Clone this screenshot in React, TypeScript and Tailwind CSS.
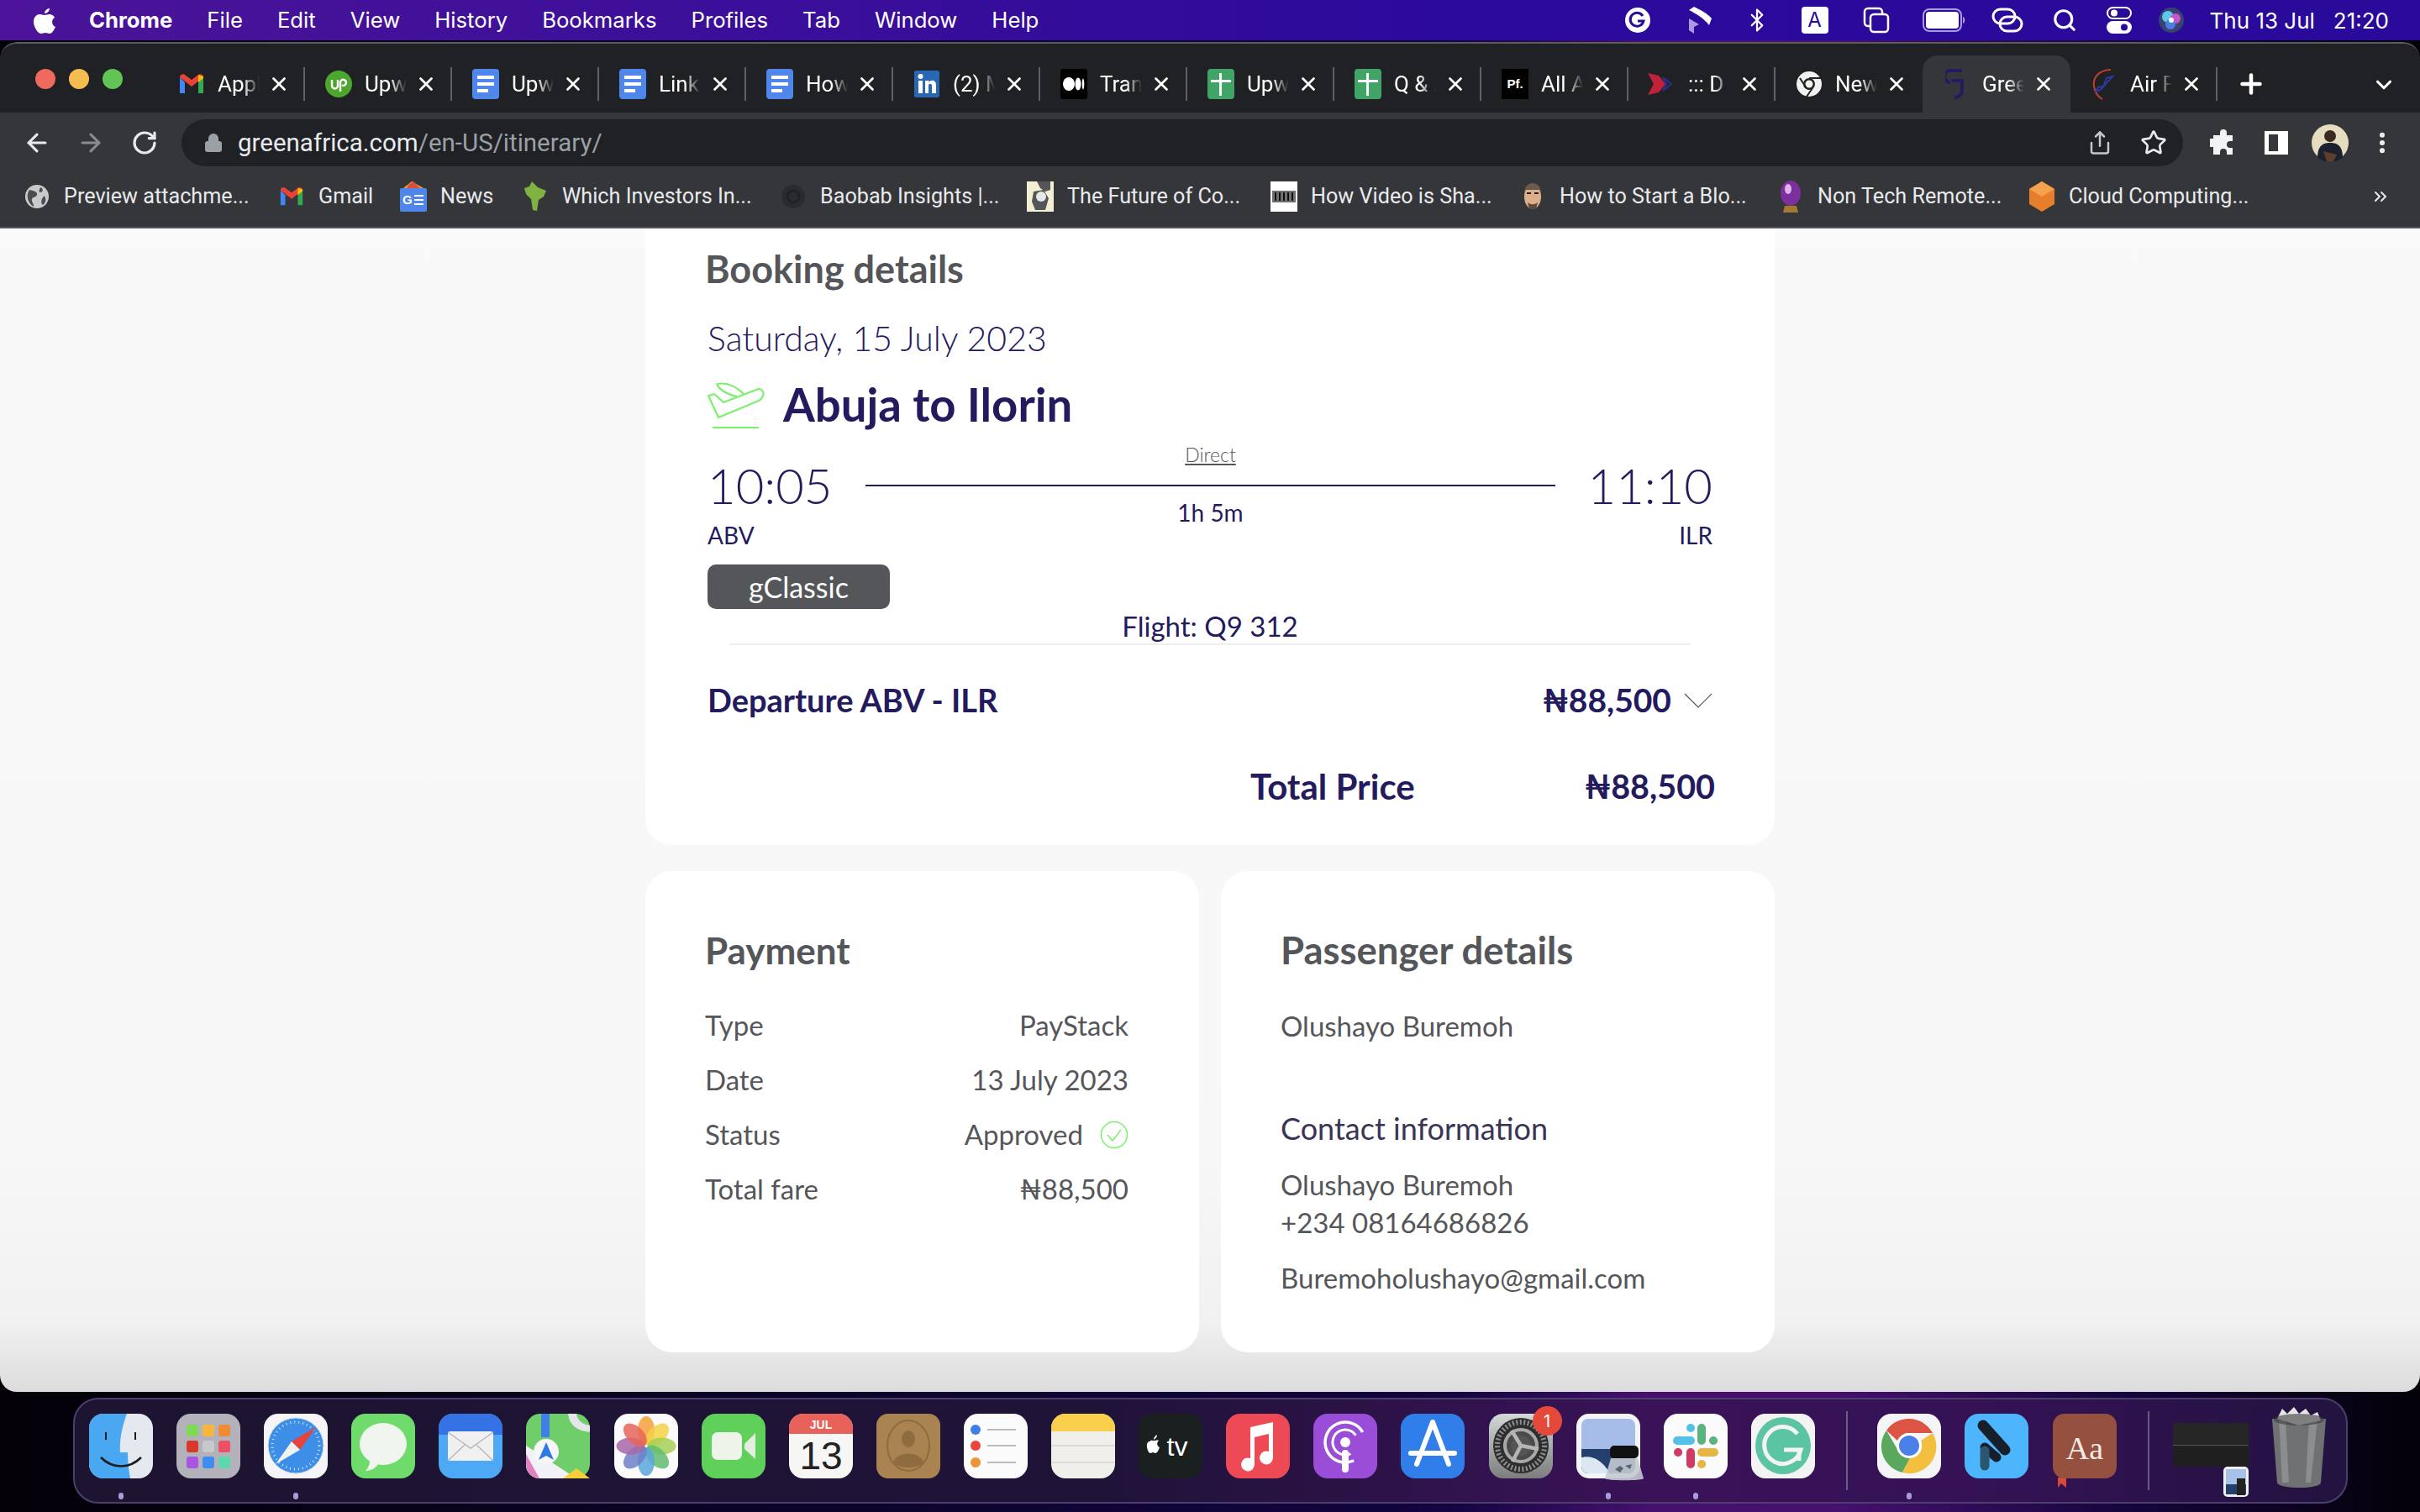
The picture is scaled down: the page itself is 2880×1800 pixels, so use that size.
import type { ReactNode } from "react";
import {
  ArrowLeft,
  ArrowRight,
  Bluetooth,
  ChevronDown,
  ChevronsRight,
  Lock,
  MoreVertical,
  Plus,
  RotateCw,
  Search,
  Share,
  Star,
  X,
} from "lucide-react";

const GmailIcon = ({ size = 32 }: { size?: number }) => (
  <svg width={size} height={size} viewBox="0 0 32 32" className="shrink-0">
    <path d="M2 8v19h6V14z" fill="#4285f4" />
    <path d="M30 8v19h-6V14z" fill="#34a853" />
    <path d="M2 8l14 11L30 8v-1a4 4 0 0 0-6-2L16 11 8 5a4 4 0 0 0-6 2z" fill="#ea4335" />
    <path d="M24 5l6 2v2l-6 5z" fill="#fbbc04" />
  </svg>
);

const DocsIcon = () => (
  <svg width={32} height={36} viewBox="0 0 32 36" className="shrink-0">
    <rect width="32" height="36" rx="4" fill="#4f86ec" />
    <rect x="6" y="8" width="20" height="4" fill="#fff" />
    <rect x="6" y="16" width="20" height="4" fill="#fff" />
    <rect x="6" y="24" width="13" height="4" fill="#fff" />
  </svg>
);

const SheetsIcon = () => (
  <svg width={32} height={36} viewBox="0 0 32 36" className="shrink-0">
    <rect width="32" height="36" rx="4" fill="#3fa465" />
    <rect x="4" y="13" width="24" height="3" fill="#fff" />
    <rect x="14" y="5" width="3" height="27" fill="#fff" />
  </svg>
);

const tabs: { icon: ReactNode; title: string; active?: boolean }[] = [
  { icon: <GmailIcon />, title: "Appl" },
  {
    icon: (
      <svg width={32} height={32} viewBox="0 0 32 32" className="shrink-0">
        <circle cx="16" cy="16" r="16" fill="#4da72e" />
        <path d="M8 11v7a3.500 3.500 0 0 0 7 0v-7M18 25V14a3.500 3.500 0 1 1 2 3.500" fill="none" stroke="#fff" strokeWidth="2.400" />
      </svg>
    ),
    title: "Upw",
  },
  { icon: <DocsIcon />, title: "Upw" },
  { icon: <DocsIcon />, title: "Link" },
  { icon: <DocsIcon />, title: "How" },
  {
    icon: (
      <svg width={30} height={32} viewBox="0 0 30 32" className="shrink-0">
        <rect width="30" height="32" rx="2" fill="#2867b2" />
        <rect x="5" y="12" width="5" height="15" fill="#fff" />
        <circle cx="7.500" cy="7" r="3" fill="#fff" />
        <path d="M13 12h4.500v2c2-3.500 8.500-3 8.500 3v10h-5v-9c0-3-4-3-4 0v9h-4z" fill="#fff" />
      </svg>
    ),
    title: "(2) M",
  },
  {
    icon: (
      <svg width={32} height={36} viewBox="0 0 32 36" className="shrink-0">
        <rect width="32" height="36" rx="3" fill="#000" />
        <ellipse cx="10" cy="18" rx="7" ry="8" fill="#fff" />
        <ellipse cx="21" cy="18" rx="3.500" ry="7.500" fill="#fff" />
        <ellipse cx="27" cy="18" rx="1.300" ry="6.500" fill="#fff" />
      </svg>
    ),
    title: "Tran",
  },
  { icon: <SheetsIcon />, title: "Upw" },
  { icon: <SheetsIcon />, title: "Q & A" },
  {
    icon: (
      <div className="w-[32px] h-[36px] bg-black flex items-center justify-center text-white text-[15px] font-bold shrink-0 [font-family:'Liberation_Sans',sans-serif]">
        Pf.
      </div>
    ),
    title: "All A",
  },
  {
    icon: (
      <svg width={34} height={32} viewBox="0 0 34 32" className="shrink-0">
        <path d="M0 3l13 3 8 10-8 10-13 3 7-13z" fill="#c0223b" />
        <path d="M18 8l10 8-10 8 4-8z" fill="none" stroke="#2b2f8f" strokeWidth="2" />
      </svg>
    ),
    title: "::: D",
  },
  {
    icon: (
      <svg width={32} height={32} viewBox="0 0 32 32" className="shrink-0">
        <circle cx="16" cy="16" r="15" fill="#f1f1f1" />
        <circle cx="16" cy="16" r="7" fill="#202124" />
        <circle cx="16" cy="16" r="4.500" fill="#f1f1f1" />
        <path d="M5 9l8 12M16 9h14M13 31l7-10" stroke="#202124" strokeWidth="2" />
      </svg>
    ),
    title: "New",
  },
  {
    icon: (
      <svg width={26} height={36} viewBox="0 0 26 36" className="shrink-0">
        <path d="M6 16a7 7 0 0 1 0-14h14M8 14h12v12c0 5-5 8-9 8" fill="none" stroke="#241a63" strokeWidth="4" />
      </svg>
    ),
    title: "Gree",
    active: true,
  },
  {
    icon: (
      <svg width={32} height={38} viewBox="0 0 32 38" className="shrink-0">
        <path d="M24 2C10 2 2 12 4 22s8 14 10 15" fill="none" stroke="#c0402a" strokeWidth="2" />
        <path d="M26 10L12 26l-6 2 3-5 6-1 4-10z" fill="none" stroke="#2b3a9f" strokeWidth="2" />
      </svg>
    ),
    title: "Air F",
  },
];

const bookmarks: { icon: ReactNode; title: string; width: string }[] = [
  {
    icon: (
      <svg width={30} height={30} viewBox="0 0 30 30" className="shrink-0">
        <circle cx="15" cy="15" r="14" fill="#c9cacc" />
        <path d="M6 7c6 1 10 3 9 6s-5 2-6 5 3 6 2 9C5 24 1 14 6 7zM20 4c3 3 2 6-2 6-1-2 0-5 2-6zM24 14c2 4 2 8-2 11-3-2-2-8 2-11z" fill="#4a4c50" />
      </svg>
    ),
    title: "Preview attachme...",
    width: "w-[303px]",
  },
  { icon: <GmailIcon size={30} />, title: "Gmail", width: "w-[145px]" },
  {
    icon: (
      <svg width={32} height={36} viewBox="0 0 32 36" className="shrink-0">
        <path d="M4 8l10-8 14 8z" fill="#f0a830" />
        <path d="M10 4l6-4 8 8H8z" fill="#d9503f" />
        <rect y="8" width="32" height="28" rx="2" fill="#4f86ec" />
        <text x="3" y="27" fontSize="15" fontWeight="700" fill="#fff" fontFamily="Liberation Sans">G</text>
        <path d="M17 17h11M17 22h11M17 27h11" stroke="#fff" strokeWidth="2" />
      </svg>
    ),
    title: "News",
    width: "w-[145px]",
  },
  {
    icon: (
      <svg width={30} height={36} viewBox="0 0 30 36" className="shrink-0">
        <path d="M2 8l6-2 3-6 7 7 10 4-3 7-6 4-2 13-5-1-2-13-6-6z" fill="#7fb241" />
      </svg>
    ),
    title: "Which Investors In...",
    width: "w-[307px]",
  },
  {
    icon: (
      <svg width={30} height={30} viewBox="0 0 30 30" className="shrink-0">
        <circle cx="15" cy="15" r="14" fill="#2a2b2e" />
        <circle cx="15" cy="15" r="7" fill="none" stroke="#202124" strokeWidth="3" />
      </svg>
    ),
    title: "Baobab Insights |...",
    width: "w-[294px]",
  },
  {
    icon: (
      <svg width={32} height={36} viewBox="0 0 32 36" className="shrink-0">
        <rect width="32" height="36" fill="#f4efd4" />
        <path d="M12 0h16v10l-6 2-6-4zM8 12l12-2 6 10-4 14H10l-4-10z" fill="#55565a" />
        <circle cx="17" cy="18" r="6" fill="#e8e8e8" />
      </svg>
    ),
    title: "The Future of Co...",
    width: "w-[290px]",
  },
  {
    icon: (
      <svg width={32} height={36} viewBox="0 0 32 36" className="shrink-0">
        <rect width="32" height="36" fill="#fff" />
        <rect x="2" y="11" width="28" height="14" fill="#6f6f6f" />
        <path d="M6 13v10M11 13v10M16 13v10M21 13v10M26 13v10" stroke="#111" strokeWidth="2" />
      </svg>
    ),
    title: "How Video is Sha...",
    width: "w-[296px]",
  },
  {
    icon: (
      <svg width={26} height={36} viewBox="0 0 26 36" className="shrink-0">
        <ellipse cx="13" cy="18" rx="10" ry="15" fill="#dcae8c" />
        <path d="M3 14c0-16 20-16 20 0l-2-4H5z" fill="#6c5a4c" />
        <path d="M6 14h5M15 14h5" stroke="#222" strokeWidth="2" />
        <path d="M7 25c4 3 8 3 12 0l-2 8H9z" fill="#5c4a3e" />
      </svg>
    ),
    title: "How to Start a Blo...",
    width: "w-[307px]",
  },
  {
    icon: (
      <svg width={28} height={38} viewBox="0 0 28 38" className="shrink-0">
        <ellipse cx="14" cy="15" rx="12" ry="15" fill="#7e2f9e" />
        <ellipse cx="11" cy="10" rx="4" ry="6" fill="#dcb6ea" />
        <path d="M7 30h14l2 8H5z" fill="#a17b2f" />
      </svg>
    ),
    title: "Non Tech Remote...",
    width: "w-[299px]",
  },
  {
    icon: (
      <svg width={32} height={36} viewBox="0 0 32 36" className="shrink-0">
        <path d="M16 0l15 9v18l-15 9-15-9V9z" fill="#e67e2b" />
        <path d="M16 0l15 9-15 9-15-9z" fill="#f4a24d" />
      </svg>
    ),
    title: "Cloud Computing...",
    width: "w-[373px]",
  },
];

const MenuBar = () => (
  <div className="h-[48px] shrink-0 flex items-center justify-between pl-[40px] pr-[37px] text-[25.700px] text-white bg-[linear-gradient(90deg,#4b1498,#2c0a9c_60%,#2a0a9a)] [font-family:Inter,sans-serif]">
    <div className="flex items-center gap-[41px]">
      <svg width={26} height={32} viewBox="0 0 26 32" fill="#fff" className="mr-[0px]">
        <path d="M19 2c0 3-3 6-6 6 0-3 3-6 6-6zM13 10c2 0 3-1 6-1 2 0 5 1 6 4-4 2-4 9 1 11-2 4-4 8-7 8-2 0-3-1-5-1s-3 1-5 1c-4 0-9-8-9-14 0-6 4-9 7-9 3 0 4 1 6 1z" />
      </svg>
      <span className="font-bold -ml-[1px]">Chrome</span>
      <span>File</span>
      <span>Edit</span>
      <span>View</span>
      <span>History</span>
      <span>Bookmarks</span>
      <span>Profiles</span>
      <span>Tab</span>
      <span>Window</span>
      <span>Help</span>
    </div>
    <div className="flex items-center">
      <svg width={32} height={32} viewBox="0 0 32 32" className="mr-[43px]">
        <circle cx="16" cy="16" r="15" fill="#fff" />
        <path d="M22 11a8 8 0 1 0 1 6h-7" fill="none" stroke="#2c0a9c" strokeWidth="3" />
      </svg>
      <svg width={30} height={32} viewBox="0 0 30 32" className="mr-[45px]">
        <path d="M2 4l6-4c8 4 16 8 21 14l-3 8C20 14 10 8 2 4z" fill="#fff" />
        <path d="M2 14l12 7-6 3v8l-6-4z" fill="#a99adf" />
      </svg>
      <Bluetooth size={30} color="#fff" strokeWidth={1.800} className="mr-[38px] -ml-[7px]" />
      <div className="w-[32px] h-[32px] bg-white rounded-[4px] flex items-center justify-center text-[#2c0a9c] text-[24px] mr-[41px]">
        A
      </div>
      <svg width={32} height={32} viewBox="0 0 32 32" fill="none" stroke="#fff" strokeWidth="2.500" className="mr-[39px]">
        <rect x="2" y="2" width="21" height="21" rx="4" />
        <rect x="9" y="9" width="21" height="21" rx="4" fill="#2c0a9c" />
      </svg>
      <svg width={52} height={28} viewBox="0 0 52 28" className="mr-[30px]">
        <rect x="1" y="1" width="45" height="26" rx="7" fill="none" stroke="#a99adf" strokeWidth="2" />
        <rect x="4" y="4" width="39" height="20" rx="4" fill="#fff" />
        <path d="M48 10c3 1 3 7 0 8z" fill="#a99adf" />
      </svg>
      <svg width={38} height={32} viewBox="0 0 38 32" fill="none" stroke="#fff" strokeWidth="3" className="mr-[34px]">
        <rect x="2" y="3" width="26" height="17" rx="8.500" />
        <rect x="10" y="12" width="26" height="17" rx="8.500" />
      </svg>
      <Search size={30} color="#fff" strokeWidth={2.500} className="mr-[35px]" />
      <svg width={30} height={32} viewBox="0 0 30 32" className="mr-[32px]">
        <rect x="1" y="1" width="28" height="13" rx="6.500" fill="none" stroke="#fff" strokeWidth="2" />
        <circle cx="9" cy="7.500" r="4" fill="#fff" />
        <rect y="17" width="30" height="15" rx="7.500" fill="#fff" />
        <circle cx="21" cy="24.500" r="4" fill="#2c0a9c" />
      </svg>
      <svg width={30} height={30} viewBox="0 0 30 30" className="mr-[31px]">
        <circle cx="15" cy="15" r="15" fill="#3a4270" />
        <circle cx="11" cy="11" r="7" fill="#5ac8e8" />
        <circle cx="20" cy="13" r="6" fill="#c755c9" />
        <circle cx="14" cy="20" r="6" fill="#4a7fe0" />
        <circle cx="15" cy="15" r="3" fill="#fff" />
      </svg>
      <span className="whitespace-pre text-[26px]">Thu 13 Jul   21:20</span>
    </div>
  </div>
);

const Tabs = () => (
  <div className="h-[84px] shrink-0 flex items-end bg-[#202124] pl-[188px] rounded-t-[20px] border-t-2 border-[#5b5c60] relative text-[26px] [font-family:Roboto,sans-serif]">
    <div className="absolute left-[42px] top-[30px] flex gap-[16px]">
      <div className="w-[24px] h-[24px] rounded-full bg-[#ee6a5f]" />
      <div className="w-[24px] h-[24px] rounded-full bg-[#f5bd4f]" />
      <div className="w-[24px] h-[24px] rounded-full bg-[#61c454]" />
    </div>
    {tabs.map((tab, i) => (
      <div
        key={i}
        className={
          tab.active
            ? "w-[176px] h-[68px] shrink-0 flex items-center pl-[23px] text-white bg-[#35363a] rounded-t-[18px]"
            : "w-[175px] h-[68px] shrink-0 flex items-center pl-[23px] text-white relative"
        }
      >
        <div className="w-[34px] flex justify-center shrink-0">{tab.icon}</div>
        <div className="w-[50px] ml-[14px] overflow-hidden whitespace-nowrap [mask-image:linear-gradient(90deg,#000_60%,transparent)]">
          {tab.title}
        </div>
        <X size={26} color="#fff" strokeWidth={2.500} className="ml-[10px] shrink-0" />
        {!tab.active && i !== 11 && <div className="absolute right-0 top-[14px] w-[2px] h-[40px] bg-[#5f6063]" />}
      </div>
    ))}
    <Plus size={36} color="#fff" strokeWidth={3} className="ml-[22px] mb-[16px] shrink-0" />
    <ChevronDown size={30} color="#fff" strokeWidth={2.500} className="ml-[125px] mb-[18px] shrink-0" />
  </div>
);

const Toolbar = () => (
  <div className="h-[72px] shrink-0 flex items-center bg-[#35363a] pl-[27px]">
    <ArrowLeft size={34} color="#e8eaed" strokeWidth={2.200} />
    <ArrowRight size={34} color="#8a8b8e" strokeWidth={2.200} className="ml-[30px]" />
    <RotateCw size={32} color="#e8eaed" strokeWidth={2.400} className="ml-[31px] mr-[28px]" />
    <div className="w-[2382px] h-[56px] rounded-full bg-[#202124] flex items-center pl-[26px] pr-[19px] text-[29.500px] [font-family:Roboto,sans-serif]">
      <Lock size={24} color="#9aa0a6" fill="#9aa0a6" />
      <span className="text-[#e8eaed] ml-[17px]">greenafrica.com</span>
      <span className="text-[#9aa0a6]">/en-US/itinerary/</span>
      <Share size={30} color="#c4c7ca" strokeWidth={2} className="ml-auto mr-[33px]" />
      <Star size={32} color="#e8eaed" strokeWidth={2} />
    </div>
    <svg width={32} height={32} viewBox="0 0 32 32" fill="#f1f3f4" className="ml-[32px]">
      <path d="M12 4a4 4 0 0 1 8 0v3h7v7h-3a4 4 0 0 0 0 8h3v8H20v-3a4 4 0 0 0-8 0v3H4V21H1a5 5 0 0 1 0-10h3V7h8z" />
    </svg>
    <svg width={28} height={28} viewBox="0 0 28 28" className="ml-[33px]">
      <rect width="28" height="28" fill="#fff" />
      <rect x="5" y="4" width="11" height="20" fill="#35363a" />
    </svg>
    <svg width={44} height={44} viewBox="0 0 44 44" className="ml-[28px]">
      <circle cx="22" cy="22" r="22" fill="#e6dcc0" />
      <circle cx="22" cy="14" r="7" fill="#3a2a20" />
      <path d="M7 40c0-14 6-18 15-18s15 4 15 18l-8 4H15z" fill="#1b2130" />
      <path d="M14 32l16 4-4 8h-8z" fill="#5c3e2c" />
    </svg>
    <MoreVertical size={32} color="#f1f3f4" strokeWidth={2.500} className="ml-[24px]" />
  </div>
);

const Bookmarks = () => (
  <div className="h-[66px] shrink-0 flex items-center bg-[#35363a] pl-[28px] pb-[8px] border-b-2 border-[#55565a] text-[25.200px] text-[#e8eaed] [font-family:Roboto,sans-serif]">
    {bookmarks.map((item) => (
      <div key={item.title} className={`${item.width} shrink-0 flex items-center gap-[16px]`}>
        <div className="w-[32px] flex justify-center shrink-0">{item.icon}</div>
        <span className="whitespace-nowrap">{item.title}</span>
      </div>
    ))}
    <ChevronsRight size={24} color="#e8eaed" strokeWidth={2} className="ml-[34px]" />
  </div>
);

const PaymentRow = ({ label, children }: { label: string; children: ReactNode }) => (
  <div className="h-[65px] flex items-center justify-between">
    <span>{label}</span>
    {children}
  </div>
);

const Page = () => (
  <div className="flex-1 min-h-0 overflow-hidden bg-[linear-gradient(180deg,#f9f9f9_0%,#f7f7f7_80%,#f1f1f1_94%,#dcdcdc_100%)] flex flex-col items-center [font-family:Lato,'Noto_Sans',sans-serif]">
    <div className="w-[1344px] h-[734px] shrink-0 bg-white rounded-b-[32px] pl-[74px] pr-[74px] text-[#241a5e] flex flex-col">
      <h2 className="text-[45px] leading-[52px] mt-[22px] -ml-[3px] font-bold text-[#55565a]">Booking details</h2>
      <p className="text-[41px] leading-[48px] mt-[33px] font-light">Saturday, 15 July 2023</p>
      <div className="flex items-center mt-[23px] h-[64px]">
        <svg width={70} height={64} viewBox="0 0 70 64" fill="none" stroke="#7bf06c" strokeWidth="2.200" strokeLinejoin="round" className="shrink-0 overflow-visible">
          <path d="M1 21l7-2 11 10 39-15c6-3 10 3 8 7-1 3-3 5-5 6L13 47z" />
          <path d="M11 7c11-2 22 2 32 12M11 7c3 7 11 12 24 15" />
          <path d="M6 59h55" />
        </svg>
        <h1 className="text-[54.500px] font-bold ml-[20px]">Abuja to Ilorin</h1>
      </div>
      <div className="flex items-center mt-[14px] h-[100px]">
        <span className="text-[58px] leading-none font-light w-[188px]">10:05</span>
        <div className="w-[821px] h-[2px] bg-[#241a5e] relative">
          <span className="absolute left-0 right-0 -top-[53px] text-center text-[23px] font-light underline text-[#55565a]">Direct</span>
          <span className="absolute left-0 right-0 top-[12px] text-center text-[28px]">1h 5m</span>
        </div>
        <span className="text-[58px] leading-none font-light ml-auto">11:10</span>
      </div>
      <div className="flex justify-between text-[28px] leading-[34px] -mt-[8px]">
        <span>ABV</span>
        <span>ILR</span>
      </div>
      <div className="w-[217px] h-[53px] mt-[18px] rounded-[10px] bg-[#55565a] text-white text-[34px] flex items-center justify-center">
        gClassic
      </div>
      <p className="text-[33px] leading-[40px] text-center mt-[0px]">Flight: Q9 312</p>
      <div className="h-[2px] bg-[#eeeff0] mx-[26px] mt-[1px]" />
      <div className="flex items-center justify-between mt-[41px] h-[48px]">
        <span className="text-[38px] font-bold">Departure ABV - ILR</span>
        <div className="flex items-center">
          <span className="text-[39px] font-bold">₦88,500</span>
          <svg width={34} height={20} viewBox="0 0 34 20" fill="none" stroke="#55565a" strokeWidth="1.200" className="ml-[15px] mt-[2px]">
            <path d="M1 2l16 16L33 2" />
          </svg>
        </div>
      </div>
      <div className="flex items-center mt-[55px] h-[48px] text-[42px] font-bold">
        <span className="ml-[646px]">Total Price</span>
        <span className="ml-auto -mr-[3px] text-[39.500px]">₦88,500</span>
      </div>
    </div>
    <div className="w-[1344px] grid grid-cols-2 gap-[26px] mt-[31px] text-[33px] text-[#55565a]">
      <div className="h-[573px] bg-white rounded-[32px] pl-[71px] pr-[84px]">
        <h2 className="text-[44px] leading-[52px] mt-[68px] font-bold">Payment</h2>
        <div className="mt-[31px]">
          <PaymentRow label="Type">
            <span>PayStack</span>
          </PaymentRow>
          <PaymentRow label="Date">
            <span>13 July 2023</span>
          </PaymentRow>
          <PaymentRow label="Status">
            <div className="flex items-center">
              <span>Approved</span>
              <svg width={34} height={34} viewBox="0 0 34 34" fill="none" stroke="#7bf06c" strokeWidth="1.500" className="ml-[20px]">
                <circle cx="17" cy="17" r="15.500" />
                <path d="M9 17l6 7 10-13" />
              </svg>
            </div>
          </PaymentRow>
          <PaymentRow label="Total fare">
            <span>₦88,500</span>
          </PaymentRow>
        </div>
      </div>
      <div className="h-[573px] bg-white rounded-[32px] pl-[71px]">
        <h2 className="text-[45.500px] leading-[52px] mt-[68px] font-bold">Passenger details</h2>
        <p className="leading-[40px] mt-[44px]">Olushayo Buremoh</p>
        <p className="text-[36px] leading-[44px] mt-[80px] text-[#3a3557]">Contact information</p>
        <p className="leading-[45px] mt-[23px]">
          Olushayo Buremoh
          <br />
          +234 08164686826
        </p>
        <p className="leading-[40px] mt-[23px]">Buremoholushayo@gmail.com</p>
      </div>
    </div>
  </div>
);

const dockIcons: { key: string; dot?: boolean; art: ReactNode }[] = [
  {
    key: "finder",
    dot: true,
    art: (
      <>
        <rect width="76" height="77" rx="17" fill="#e4e8ef" />
        <path d="M17 0h28c-6 16-9 32-8 46h9c0 10 1 20 3 31H17A17 17 0 0 1 0 60V17A17 17 0 0 1 17 0z" fill="#4aa7f2" />
        <path d="M20 22v9M55 22v9" stroke="#1b1b1b" strokeWidth="2" />
        <path d="M14 52c14 14 34 14 48 0" fill="none" stroke="#1b1b1b" strokeWidth="2.500" />
      </>
    ),
  },
  {
    key: "launchpad",
    art: (
      <>
        <rect width="76" height="77" rx="17" fill="#b3b2ba" />
        {["#7ed957", "#f6b73c", "#f08a35", "#d8392c", "#c8c9cb", "#ee4f63", "#a855e0", "#3f8cf2", "#5ed6b0"].map((c, i) => (
          <rect key={c} x={12 + (i % 3) * 19} y={13 + Math.floor(i / 3) * 19} width="14" height="14" rx="3" fill={c} />
        ))}
      </>
    ),
  },
  {
    key: "safari",
    dot: true,
    art: (
      <>
        <rect width="76" height="77" rx="17" fill="#f5f5f7" />
        <circle cx="38" cy="38" r="33" fill="#3c8ee6" stroke="#d8dde4" strokeWidth="1" />
        <circle cx="38" cy="38" r="28" fill="none" stroke="#cfe3f7" strokeWidth="3" strokeDasharray="1 4" />
        <path d="M62 16L33 33l10 10z" fill="#e8433a" />
        <path d="M14 60l19-27 10 10z" fill="#f2f2f2" />
      </>
    ),
  },
  {
    key: "messages",
    art: (
      <>
        <rect width="76" height="77" rx="17" fill="#6edb6a" />
        <ellipse cx="38" cy="36" rx="28" ry="25" fill="#f1f5ef" />
        <path d="M22 55c0 6-2 10-5 13 6 0 12-3 15-8z" fill="#f1f5ef" />
      </>
    ),
  },
  {
    key: "mail",
    art: (
      <>
        <rect width="76" height="77" rx="17" fill="#4da8f5" />
        <path d="M17 0h42a17 17 0 0 1 17 17v8H0v-8A17 17 0 0 1 17 0z" fill="#3573e4" />
        <rect x="11" y="21" width="54" height="35" rx="3" fill="#f0f0f0" />
        <path d="M11 22l27 19 27-19M11 56l20-19M65 56L45 37" fill="none" stroke="#b9b9b9" strokeWidth="1.500" />
      </>
    ),
  },
  {
    key: "maps",
    art: (
      <>
        <rect width="76" height="77" rx="17" fill="#6fce6a" />
        <path d="M0 38l60 39H16A16 16 0 0 1 0 60z" fill="#f1f1f6" />
        <path d="M0 48l16 29A16 16 0 0 1 0 60z" fill="#e183c2" />
        <path d="M44 77l16-12 16 12z" fill="#f6cd3b" />
        <path d="M18 0h10v28H18z" fill="#3f7fe8" />
        <path d="M50 0c2 14 10 20 26 22v-8c-8-1-15-6-16-14z" fill="#e5e5ea" />
        <circle cx="24" cy="45" r="15" fill="#f6f6f6" />
        <path d="M24 34l9 21-9-5-9 5z" fill="#2f78e6" />
      </>
    ),
  },
  {
    key: "photos",
    art: (
      <>
        <rect width="76" height="77" rx="17" fill="#fbfbfb" />
        {["#f4a13a", "#f3d246", "#a7cf55", "#62bb71", "#5aa6d9", "#6e7fc4", "#a866a8", "#e8655b"].map((c, i) => (
          <ellipse key={c} cx="38" cy="20" rx="10" ry="17" fill={c} fillOpacity="0.85" transform={`rotate(${i * 45} 38 38.500)`} />
        ))}
      </>
    ),
  },
  {
    key: "facetime",
    art: (
      <>
        <rect width="76" height="77" rx="17" fill="#5fd15a" />
        <rect x="12" y="22" width="36" height="33" rx="7" fill="#eef4ea" />
        <path d="M51 36l13-13v31L51 42z" fill="#e3eee0" />
      </>
    ),
  },
  {
    key: "calendar",
    art: (
      <>
        <rect width="76" height="77" rx="17" fill="#f6f6f5" />
        <path d="M17 0h42a17 17 0 0 1 17 17v7H0v-7A17 17 0 0 1 17 0z" fill="#e8625a" />
        <text x="38" y="18" textAnchor="middle" fontSize="14" fontWeight="700" fill="#fff" fontFamily="Liberation Sans">JUL</text>
        <text x="38" y="66" textAnchor="middle" fontSize="46" fill="#222" fontFamily="Liberation Sans">13</text>
      </>
    ),
  },
  {
    key: "contacts",
    art: (
      <>
        <rect width="76" height="77" rx="14" fill="#a98350" />
        <ellipse cx="38" cy="38" rx="25" ry="30" fill="none" stroke="#8e6c40" strokeWidth="2" />
        <ellipse cx="38" cy="30" rx="8" ry="10" fill="#8e6c40" />
        <path d="M20 58c4-14 32-14 36 0-8 8-28 8-36 0z" fill="#8e6c40" />
      </>
    ),
  },
  {
    key: "reminders",
    art: (
      <>
        <rect width="76" height="77" rx="17" fill="#fbfbfb" />
        <circle cx="14" cy="19" r="6" fill="#3f80e8" />
        <circle cx="14" cy="38" r="6" fill="#e8463a" />
        <circle cx="14" cy="58" r="6" fill="#ee9435" />
        <path d="M28 19h34M28 38h34M28 58h34" stroke="#bbb" strokeWidth="2" />
      </>
    ),
  },
  {
    key: "notes",
    art: (
      <>
        <rect width="76" height="77" rx="17" fill="#f0efea" />
        <path d="M17 0h42a17 17 0 0 1 17 17v4H0v-4A17 17 0 0 1 17 0z" fill="#f8ce4b" />
        <path d="M0 38h76M0 58h76" stroke="#dcdbd6" strokeWidth="2" />
      </>
    ),
  },
  {
    key: "tv",
    art: (
      <>
        <rect width="76" height="77" rx="17" fill="#1a2020" />
        <text x="46" y="50" textAnchor="middle" fontSize="32" fontWeight="400" fill="#fff" fontFamily="Liberation Sans">tv</text>
        <path d="M13 33c2-2 4-1 6-1s3-1 5 0c-3 2-2 7 1 8-1 3-3 7-5 7-1 0-2-1-3-1s-2 1-3 1c-3 0-7-13-1-14zM18 31c0-3 2-5 4-6 0 3-2 5-4 6z" fill="#fff" />
      </>
    ),
  },
  {
    key: "music",
    art: (
      <>
        <rect width="76" height="77" rx="17" fill="#ed4a55" />
        <path d="M29 16l27-6v42a8 8 0 1 1-5-7V24l-17 4v32a8 8 0 1 1-5-7z" fill="#fff" />
      </>
    ),
  },
  {
    key: "podcasts",
    art: (
      <>
        <rect width="76" height="77" rx="17" fill="#9a4ed8" />
        <circle cx="38" cy="34" r="24" fill="none" stroke="#fff" strokeWidth="3.500" strokeDasharray="110 40" transform="rotate(65 38 34)" />
        <circle cx="38" cy="34" r="15" fill="none" stroke="#fff" strokeWidth="3" strokeDasharray="68 26" transform="rotate(65 38 34)" />
        <circle cx="38" cy="34" r="6" fill="#fff" />
        <rect x="34" y="43" width="8" height="27" rx="4" fill="#fff" />
      </>
    ),
  },
  {
    key: "appstore",
    art: (
      <>
        <rect width="76" height="77" rx="17" fill="#2f7eea" />
        <path d="M38 10L19 60M38 10l19 50M12 47h52" stroke="#fff" strokeWidth="6" strokeLinecap="round" fill="none" />
      </>
    ),
  },
  {
    key: "settings",
    art: (
      <>
        <defs>
          <linearGradient id="settingsBody" x1="0" y1="0" x2="0" y2="1">
            <stop offset="0" stopColor="#d3d8d9" />
            <stop offset="1" stopColor="#7d7d7d" />
          </linearGradient>
        </defs>
        <rect width="76" height="77" rx="17" fill="url(#settingsBody)" />
        <circle cx="38" cy="38" r="33" fill="#2e2e2e" />
        <circle cx="38" cy="38" r="28" fill="none" stroke="#8f8f8f" strokeWidth="6" strokeDasharray="2 2.500" />
        <circle cx="38" cy="38" r="21" fill="#4a4a4a" />
        <circle cx="38" cy="38" r="19" fill="none" stroke="#a8a8a8" strokeWidth="4" />
        <circle cx="38" cy="38" r="12" fill="#555" />
        <path d="M38 38L27 20M38 38l21 4M38 38L28 57" stroke="#b5b5b5" strokeWidth="4.500" />
      </>
    ),
  },
  {
    key: "preview",
    dot: true,
    art: (
      <>
        <rect width="76" height="77" rx="15" fill="#f5f5f7" />
        <rect x="6" y="6" width="64" height="65" rx="8" fill="#a5bde8" />
        <path d="M6 42h64v21a8 8 0 0 1-8 8H14a8 8 0 0 1-8-8z" fill="#23406e" />
        <path d="M6 52c12-3 24 2 34 19H14a8 8 0 0 1-8-8z" fill="#dbe7f2" />
        <rect x="40" y="38" width="34" height="15" rx="5" fill="#111" />
        <path d="M41 53h32l7 24c0 3-46 3-46 0z" fill="#c4cad0" fillOpacity="0.900" />
        <path d="M46 66l6-4 4 3-4 5zM58 62l8-2-2 6z" fill="#5c6670" />
      </>
    ),
  },
  {
    key: "slack",
    dot: true,
    art: (
      <>
        <rect width="76" height="77" rx="17" fill="#fbfbfb" />
        <g fill="none" strokeWidth="10" strokeLinecap="round">
          <path d="M16 32h16M32 17h.1" stroke="#55c0e8" />
          <path d="M45 17v15M59 32h.1" stroke="#5cb380" />
          <path d="M17 46h.1M32 46v14" stroke="#d13a63" />
          <path d="M45 46h15M45 60h.1" stroke="#e5b545" />
        </g>
      </>
    ),
  },
  {
    key: "grammarly",
    art: (
      <>
        <rect width="76" height="77" rx="17" fill="#f3f3f3" />
        <ellipse cx="38" cy="38" rx="33" ry="34" fill="#5bc4a2" />
        <path d="M55 24a22 22 0 1 0 4 19H39" fill="none" stroke="#f3f3f3" strokeWidth="5" />
        <path d="M57 43v13" stroke="#f3f3f3" strokeWidth="5" />
      </>
    ),
  },
];

const dockAfter: { key: string; dot?: boolean; art: ReactNode }[] = [
  {
    key: "chrome",
    dot: true,
    art: (
      <>
        <rect width="76" height="77" rx="17" fill="#f5f5f7" />
        <path d="M38 6a32 32 0 0 1 28 17H38a15 15 0 0 0-14 9L11 20A32 32 0 0 1 38 6z" fill="#dc5443" />
        <path d="M11 20l14 24a15 15 0 0 0 14 9L30 70A32 32 0 0 1 11 20z" fill="#5aa75e" />
        <path d="M66 23a32 32 0 0 1-36 47l9-17a15 15 0 0 0 13-21z" fill="#f3bf3f" />
        <circle cx="38" cy="38" r="15" fill="#fff" />
        <circle cx="38" cy="38" r="12" fill="#4a80e8" />
      </>
    ),
  },
  {
    key: "flow",
    art: (
      <>
        <rect width="76" height="77" rx="17" fill="#4db5fb" />
        <path d="M22 14l26 29" stroke="#16202a" strokeWidth="13" strokeLinecap="round" />
        <path d="M24 40l14 12" stroke="#16202a" strokeWidth="11" strokeLinecap="round" />
        <path d="M24 44v18" stroke="#2c5670" strokeWidth="11" strokeLinecap="round" />
      </>
    ),
  },
  {
    key: "dictionary",
    art: (
      <>
        <path d="M6 76h10v12l-6-5-4 5z" fill="#d94a36" />
        <rect width="76" height="77" rx="14" fill="#96503f" />
        <text x="38" y="54" textAnchor="middle" fontSize="38" fill="#f3ece2" fontFamily="Liberation Serif">Aa</text>
      </>
    ),
  },
];

const DockIcon = ({ art, dot, badge }: { art: ReactNode; dot?: boolean; badge?: boolean }) => (
  <div className="w-[76px] h-[77px] shrink-0 relative">
    <svg width={76} height={90} viewBox="0 0 76 90" className="overflow-visible">
      {art}
    </svg>
    {badge && (
      <div className="absolute -top-[9px] -right-[11px] w-[35px] h-[35px] rounded-full bg-[#e4493a] text-white text-[20px] flex items-center justify-center [font-family:Inter,sans-serif]">
        1
      </div>
    )}
    {dot && <div className="absolute left-[35px] top-[94px] w-[6px] h-[8px] rounded-full bg-[#a99bd8]" />}
  </div>
);

const Dock = () => (
  <div className="h-[126px] w-[2707px] ml-[87px] mt-[7px] shrink-0 rounded-[30px] border-2 border-[#4c3f6c] bg-[linear-gradient(90deg,#1c1430,#1f1338_45%,#3a1258_70%,#331254_85%,#221340)] flex items-start pt-[17px] pl-[17px]">
    <div className="flex gap-[28.100px]">
      {dockIcons.map((icon) => (
        <DockIcon key={icon.key} art={icon.art} dot={icon.dot} badge={icon.key === "settings"} />
      ))}
    </div>
    <div className="w-[2px] h-[94px] -mt-[3px] ml-[37px] bg-[#6c5a84]" />
    <div className="flex gap-[28.500px] ml-[35px]">
      {dockAfter.map((icon) => (
        <DockIcon key={icon.key} art={icon.art} dot={icon.dot} />
      ))}
    </div>
    <div className="w-[2px] h-[94px] -mt-[3px] ml-[37px] bg-[#6c5a84]" />
    <div className="w-[90px] h-[88px] ml-[28px] mt-[11px] flex flex-col items-end">
      <div className="w-[90px] h-[26px] bg-[#262626]" />
      <div className="w-[90px] h-[26px] bg-[#1f1f1f] border-t border-[#555]" />
      <svg width={30} height={36} viewBox="0 0 30 36">
        <rect width="30" height="36" rx="5" fill="#f0f0f3" />
        <rect x="3" y="3" width="24" height="18" fill="#a8c1e8" />
        <rect x="3" y="21" width="24" height="12" fill="#23406e" />
        <rect x="16" y="14" width="10" height="20" fill="#222" />
      </svg>
    </div>
    <svg width={68} height={100} viewBox="0 0 68 100" className="ml-[26px] -mt-[8px] shrink-0">
      <path d="M2 14l64 0-6 76c-1 8-50 8-52 0z" fill="#6f7173" />
      <path d="M10 14l4 76h8L18 14zM46 14l-4 76h6l8-76z" fill="#8b8d8f" />
      <path d="M8 14l6-12 6 6 8-8 6 8 8-6 6 8 8-4 4 10-26 6z" fill="#e6e6e6" />
      <ellipse cx="34" cy="15" rx="30" ry="7" fill="#3a3a3c" fillOpacity="0.600" />
    </svg>
  </div>
);

export default function App() {
  return (
    <div className="w-[2880px] h-[1800px] overflow-hidden flex flex-col bg-[linear-gradient(90deg,#040108,#0e0430_40%,#120540_60%,#45106e_68%,#45106e_76%,#14063c_88%,#040108)]">
      <MenuBar />
      <div className="h-[1607px] mt-[2px] shrink-0 flex flex-col rounded-[20px] overflow-hidden">
        <Tabs />
        <Toolbar />
        <Bookmarks />
        <Page />
      </div>
      <Dock />
    </div>
  );
}
